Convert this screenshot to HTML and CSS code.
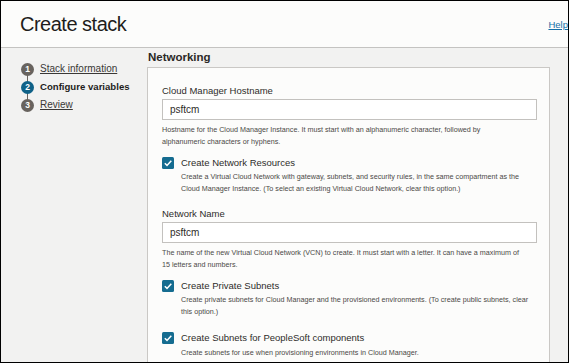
FILE: index.html
```html
<!DOCTYPE html>
<html lang="en">
<head>
<meta charset="utf-8">
<title>Create stack</title>
<link rel="stylesheet" href="styles.css">
</head>
<body>
<div class="frame">
  <header class="top">
    <h1 class="title">Create stack</h1>
    <a class="help" href="#">Help</a>
  </header>
  <div class="body">
    <nav class="steps">
      <ol class="step-list">
        <li class="step"><span class="num">1</span><a class="step-link" href="#">Stack information</a></li>
        <li class="step current"><span class="num">2</span><span class="step-name">Configure variables</span></li>
        <li class="step"><span class="num">3</span><a class="step-link" href="#">Review</a></li>
      </ol>
    </nav>
    <main class="main">
      <h2 class="section">Networking</h2>
      <div class="card">
        <div class="field">
          <label class="label">Cloud Manager Hostname</label>
          <div class="input">psftcm</div>
          <p class="hint">Hostname for the Cloud Manager Instance. It must start with an alphanumeric character, followed by<br>alphanumeric characters or hyphens.</p>
        </div>
        <div class="check">
          <div class="check-row">
            <svg class="box" viewBox="0 0 12 12" width="12" height="12"><rect x="0" y="0" width="12" height="12" rx="1.5" fill="#156c90"/><path d="M2.8 6.3 L5 8.4 L9.3 3.7" fill="none" stroke="#fff" stroke-width="1.5"/></svg>
            <span class="check-label">Create Network Resources</span>
          </div>
          <p class="hint desc">Create a Virtual Cloud Network with gateway, subnets, and security rules, in the same compartment as the<br>Cloud Manager Instance. (To select an existing Virtual Cloud Network, clear this option.)</p>
        </div>
        <div class="field">
          <label class="label">Network Name</label>
          <div class="input">psftcm</div>
          <p class="hint">The name of the new Virtual Cloud Network (VCN) to create. It must start with a letter. It can have a maximum of<br>15 letters and numbers.</p>
        </div>
        <div class="check">
          <div class="check-row">
            <svg class="box" viewBox="0 0 12 12" width="12" height="12"><rect x="0" y="0" width="12" height="12" rx="1.5" fill="#156c90"/><path d="M2.8 6.3 L5 8.4 L9.3 3.7" fill="none" stroke="#fff" stroke-width="1.5"/></svg>
            <span class="check-label">Create Private Subnets</span>
          </div>
          <p class="hint desc">Create private subnets for Cloud Manager and the provisioned environments. (To create public subnets, clear<br>this option.)</p>
        </div>
        <div class="check">
          <div class="check-row">
            <svg class="box" viewBox="0 0 12 12" width="12" height="12"><rect x="0" y="0" width="12" height="12" rx="1.5" fill="#156c90"/><path d="M2.8 6.3 L5 8.4 L9.3 3.7" fill="none" stroke="#fff" stroke-width="1.5"/></svg>
            <span class="check-label">Create Subnets for PeopleSoft components</span>
          </div>
          <p class="hint desc">Create subnets for use when provisioning environments in Cloud Manager.</p>
        </div>
      </div>
    </main>
  </div>
</div>
</body>
</html>
```
FILE: styles.css
```css
html, body {
  margin: 0;
  padding: 0;
}

.frame {
  width: 569px;
  height: 363px;
  box-sizing: border-box;
  border: 1px solid #000;
  overflow: hidden;
  background: #f2f2f1;
  font-family: "Liberation Sans", Arial, sans-serif;
  color: #2e2c2a;
  display: flex;
  flex-direction: column;
}

.top {
  height: 46px;
  flex-shrink: 0;
  background: #fcfcfb;
  border-bottom: 1px solid #c4c3c1;
  display: flex;
  align-items: flex-start;
  padding-left: 19px;
}

.title {
  margin: 11px 0 0;
  font-size: 20px;
  line-height: 24px;
  letter-spacing: -0.5px;
  font-weight: normal;
  color: #1f1d1b;
}

.help {
  margin-left: auto;
  margin-top: 18px;
  font-size: 9.5px;
  line-height: 12px;
  color: #176fa6;
  text-decoration: underline;
  white-space: nowrap;
}

.body {
  display: flex;
  flex: 1;
  min-height: 0;
}

.steps {
  width: 146px;
  flex-shrink: 0;
}

.step-list {
  list-style: none;
  margin: 12px 0 0;
  padding: 0 0 0 20px;
  position: relative;
}

.step-list::before {
  content: "";
  position: absolute;
  left: 26px;
  top: 9px;
  bottom: 9px;
  width: 1px;
  background: #68635e;
}

.step {
  display: flex;
  align-items: center;
  gap: 6px;
  height: 18px;
  font-size: 10px;
  line-height: 12px;
}

.num {
  width: 13px;
  height: 13px;
  border-radius: 50%;
  background: #68635e;
  color: #fff;
  font-size: 8.5px;
  font-weight: bold;
  display: flex;
  align-items: center;
  justify-content: center;
  position: relative;
  z-index: 1;
  flex-shrink: 0;
}

.current .num {
  background: #0f6187;
}

.step-link {
  color: #3a3836;
  text-decoration: underline;
}

.step-name {
  color: #1f1d1b;
  font-weight: bold;
  font-size: 9.6px;
}

.main {
  flex: 1;
  min-width: 0;
  padding-right: 18px;
}

.section {
  margin: 2px 0 3px 1px;
  font-size: 11.5px;
  line-height: 14px;
  font-weight: bold;
  color: #2b2927;
}

.card {
  background: #fcfcfb;
  border: 1px solid #cac8c5;
  padding: 17px 12px 40px 14px;
}

.label {
  display: block;
  font-size: 9.5px;
  line-height: 12px;
  color: #2e2c2a;
}

.input {
  margin-top: 2px;
  height: 21px;
  box-sizing: border-box;
  border: 1px solid #c3c1be;
  background: #fff;
  padding-left: 7px;
  font-size: 10px;
  line-height: 19px;
  color: #2e2c2a;
}

.hint {
  margin: 4px 0 0;
  font-size: 7.2px;
  line-height: 12px;
  color: #4b4946;
  white-space: nowrap;
}

.field + .check {
  margin-top: 7.5px;
}

.check + .field,
.check + .check {
  margin-top: 13px;
}

.check-row {
  display: flex;
  align-items: center;
  gap: 7px;
  height: 14px;
  font-size: 9.5px;
  line-height: 14px;
}

.box {
  display: block;
  flex-shrink: 0;
}

.check-label {
  color: #2e2c2a;
}

.desc {
  margin: 1.5px 0 0 19px;
}
```
